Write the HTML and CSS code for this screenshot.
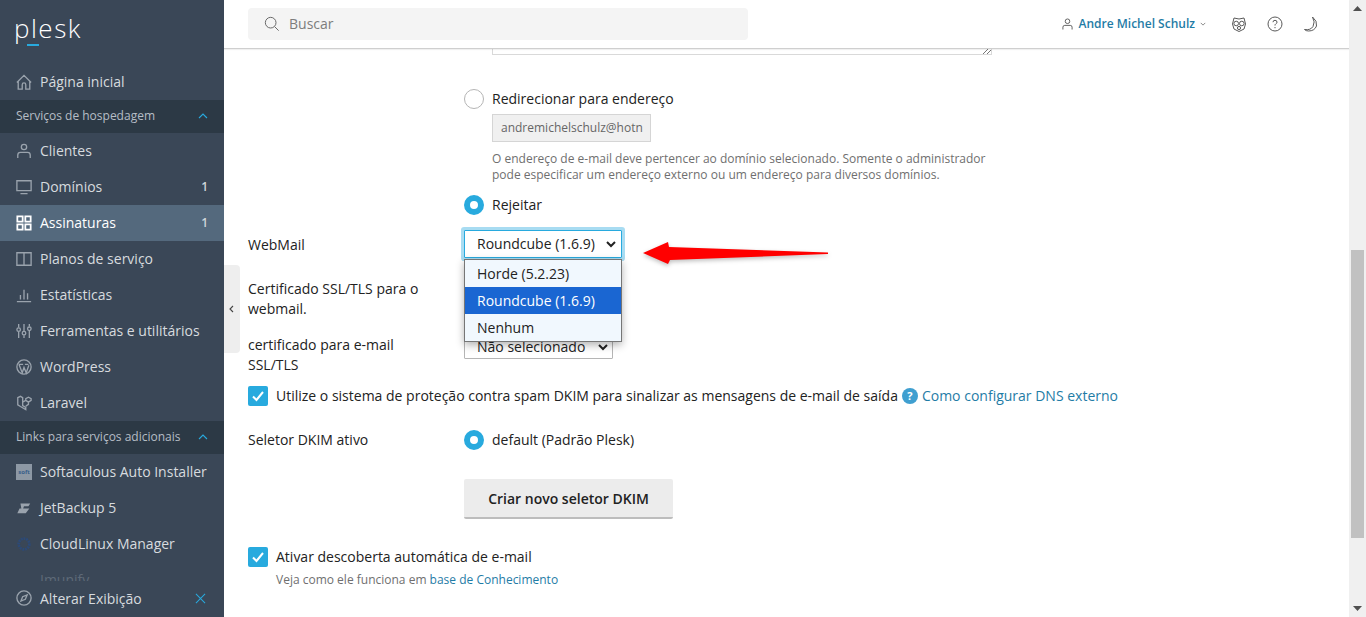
FILE: index.html
```html
<!DOCTYPE html>
<html lang="pt">
<head>
<meta charset="utf-8">
<title>Plesk</title>
<link rel="stylesheet" href="styles.css">
</head>
<body>
<div class="app">
  <aside class="sidebar">
    <div class="logo"><span class="logo-text">plesk</span><span class="logo-bar"></span></div>
    <nav class="nav">
      <a class="item"><svg class="ico" viewBox="0 0 18 18"><path d="M1 9.500 9 1.500l8 8M2.500 8v9H7v-5q0-2 2-2t2 2v5h4.500V8"/></svg><span>Página inicial</span></a>
      <div class="section"><span>Serviços de hospedagem</span><svg class="chev" viewBox="0 0 10 6"><path d="M1 5 5 1l4 4"/></svg></div>
      <a class="item"><svg class="ico" viewBox="0 0 18 18"><circle cx="9" cy="4.500" r="3"/><path d="M2 17v-3.500q0-3 3-3h8q3 0 3 3V17"/></svg><span>Clientes</span></a>
      <a class="item"><svg class="ico" viewBox="0 0 18 18"><path d="M1 2h16v11H1zM5 16.500h8"/></svg><span>Domínios</span><b class="count">1</b></a>
      <a class="item active"><svg class="ico" viewBox="0 0 18 18"><path d="M1.500 1.500h6v6h-6zM10.500 1.500h6v6h-6zM1.500 10.500h6v6h-6zM10.500 10.500h6v6h-6z"/></svg><span>Assinaturas</span><b class="count">1</b></a>
      <a class="item"><svg class="ico" viewBox="0 0 18 18"><path d="M1 2h16v14H1zM9 2v14"/></svg><span>Planos de serviço</span></a>
      <a class="item"><svg class="ico" viewBox="0 0 18 18"><path d="M1 16.500h16M5 14V9M9 14V3M13 14V7"/></svg><span>Estatísticas</span></a>
      <a class="item"><svg class="ico" viewBox="0 0 18 18"><path d="M3 1v4M3 10v7M9 1v8M9 14v3M15 1v3M15 9v8"/><circle cx="3" cy="7.500" r="2"/><circle cx="9" cy="11.500" r="2"/><circle cx="15" cy="6.500" r="2"/></svg><span>Ferramentas e utilitários</span></a>
      <a class="item"><svg class="ico" viewBox="0 0 18 18"><circle cx="9" cy="9" r="8"/><path d="M3.500 6.500 7 15.500 9 9.500l2.500 6 3-8.500M3 6h5M10 6h4"/></svg><span>WordPress</span></a>
      <a class="item"><svg class="ico" viewBox="0 0 18 18"><path d="M2 3 5 1.500 7.500 3v9l3.500 2v2.500L5 13 2 11zM7.500 8l3.500-2V4l3-1.500L17 4v2l-3 2-3-2M14 8v2.500l-3 2"/></svg><span>Laravel</span></a>
      <div class="section"><span>Links para serviços adicionais</span><svg class="chev" viewBox="0 0 10 6"><path d="M1 5 5 1l4 4"/></svg></div>
      <a class="item"><span class="soft">soft</span><span>Softaculous Auto Installer</span></a>
      <a class="item"><svg class="ico filled" viewBox="0 0 18 18"><path d="M5 4h11l-2 3H9L8 9.500h7L11 15H1.500L4 9.500h2z"/></svg><span>JetBackup 5</span></a>
      <a class="item"><svg class="ico cloud" viewBox="0 0 18 18"><circle cx="9" cy="9" r="6"/></svg><span>CloudLinux Manager</span></a>
      <a class="item faded"><span class="ico-space"></span><span>Imunify</span></a>
    </nav>
    <div class="foot">
      <svg class="ico" viewBox="0 0 18 18"><circle cx="9" cy="9" r="8"/><path d="M12.500 5.500 10.500 10.500 5.500 12.500 7.500 7.500z"/></svg>
      <span>Alterar Exibição</span>
      <svg class="close" viewBox="0 0 12 12"><path d="M1 1l10 10M11 1 1 11"/></svg>
    </div>
  </aside>

  <div class="main">
    <header class="top">
      <div class="search">
        <svg class="search-ico" viewBox="0 0 18 18"><circle cx="7.500" cy="7.500" r="6"/><path d="M12 12l4.500 4.500"/></svg>
        <span>Buscar</span>
      </div>
      <div class="user">
        <svg class="user-ico" viewBox="0 0 12 13"><circle cx="6" cy="3.500" r="2.500"/><path d="M1 12.500V10q0-2 2-2h6q2 0 2 2v2.500"/></svg>
        <span class="user-name">Andre Michel Schulz</span>
        <svg class="user-chev" viewBox="0 0 8 5"><path d="M1 1l3 3 3-3"/></svg>
      </div>
      <div class="tools">
        <svg viewBox="0 0 16 16"><path d="M3 2 8 3l5-1 1.500 6L13 13l-5 2.500L3 13 1.500 8z"/><circle cx="5.200" cy="7.500" r="2.300"/><circle cx="10.800" cy="7.500" r="2.300"/><circle cx="8" cy="12" r="1.600"/></svg>
        <svg viewBox="0 0 16 16"><circle cx="8" cy="8" r="7"/><path d="M6 6.200Q6 4.300 8 4.300T10 6.200Q10 7.300 8.800 7.900 8 8.300 8 9.500M8 11v1.200"/></svg>
        <svg viewBox="0 0 16 16"><path d="M9.500 1Q14.500 5 13.500 10 11.500 15 5.500 15 3 15 1.500 13.500 7.500 14.500 10 10.500 12.500 6 9.500 1z"/></svg>
      </div>
    </header>

    <div class="scroller">
      <div class="content">
        <div class="row">
          <div class="label"></div>
          <div class="field">
            <div class="textarea"><svg class="grip" viewBox="0 0 8 8"><path d="M0 8l8-8M4 8l4-4"/></svg></div>
            <div class="radio-line first"><span class="radio"></span><span>Redirecionar para endereço</span></div>
            <div class="sub">
              <div class="email"><span>andremichelschulz@hotn</span></div>
              <p class="hint">O endereço de e-mail deve pertencer ao domínio selecionado. Somente o administrador<br>pode especificar um endereço externo ou um endereço para diversos domínios.</p>
            </div>
            <div class="radio-line reject"><span class="radio on"></span><span>Rejeitar</span></div>
          </div>
        </div>

        <div class="row webmail">
          <div class="label">WebMail</div>
          <div class="field"><div class="select focus"><span>Roundcube (1.6.9)</span><svg viewBox="0 0 10 7"><path d="M1 1l4 4 4-4"/></svg></div></div>
        </div>
        <div class="row ssl">
          <div class="label">Certificado SSL/TLS para o webmail.</div>
          <div class="field"></div>
        </div>
        <div class="row mailcert">
          <div class="label">certificado para e-mail SSL/TLS</div>
          <div class="field"><div class="select small"><span>Não selecionado</span><svg viewBox="0 0 10 7"><path d="M1 1l4 4 4-4"/></svg></div></div>
        </div>

        <div class="check-line dkim">
          <span class="check"><svg viewBox="0 0 20 20"><path d="M5 10.500 8.500 14 15 6"/></svg></span>
          <span>Utilize o sistema de proteção contra spam DKIM para sinalizar as mensagens de e-mail de saída</span>
          <span class="help">?</span>
          <a class="link">Como configurar DNS externo</a>
        </div>

        <div class="row selector">
          <div class="label">Seletor DKIM ativo</div>
          <div class="field">
            <div class="radio-line"><span class="radio on"></span><span>default (Padrão Plesk)</span></div>
            <button class="btn" type="button">Criar novo seletor DKIM</button>
          </div>
        </div>

        <div class="check-line auto">
          <span class="check"><svg viewBox="0 0 20 20"><path d="M5 10.500 8.500 14 15 6"/></svg></span>
          <span>Ativar descoberta automática de e-mail</span>
        </div>
        <p class="auto-hint">Veja como ele funciona em <a class="link">base de Conhecimento</a></p>
      </div>
    </div>
  </div>

  <div class="scrollbar">
    <svg class="sb-arrow" viewBox="0 0 9 5"><path d="M4.500 0 9 5H0z"/></svg>
    <div class="sb-track"><div class="sb-thumb"></div></div>
    <svg class="sb-arrow" viewBox="0 0 9 5"><path d="M0 0h9L4.500 5z"/></svg>
  </div>

  <div class="collapse"><svg viewBox="0 0 5 8"><path d="M4 1 1 4l3 3"/></svg></div>

  <div class="menu">
    <div class="opt">Horde (5.2.23)</div>
    <div class="opt sel">Roundcube (1.6.9)</div>
    <div class="opt">Nenhum</div>
  </div>

  <svg class="red-arrow" viewBox="0 0 190 30"><path d="M1 14 26 3l1 5 159 5.500v1.500L28 21l-2 4z"/></svg>
</div>
</body>
</html>
```

FILE: styles.css
```css
* { box-sizing: border-box; }
html, body { margin: 0; height: 100%; overflow: hidden; }
body { font-family: "Open Sans", "Noto Sans", sans-serif; font-size: 14px; color: #222; background: #fff; }
svg { display: block; }
.app { position: relative; display: flex; width: 1366px; height: 617px; overflow: hidden; }

/* Sidebar */
.sidebar { position: relative; width: 224px; flex: none; height: 617px; background: #3a4757; color: #d9dde1; overflow: hidden; }
.logo { position: relative; height: 64px; }
.logo-text { position: absolute; left: 14px; top: 5px; font-family: "Open Sans", sans-serif; font-size: 26px; line-height: 46px; font-weight: 300; color: #fff; letter-spacing: 1.500px; }
.logo-bar { position: absolute; left: 27px; top: 44px; width: 12px; height: 2px; background: #28aade; }
.item { display: flex; align-items: center; height: 36px; padding: 0 16px; line-height: 20px; color: #d7dbdf; }
.item > span:not(.soft):not(.ico-space) { margin-left: 8px; }
.item.active { background: #54697d; color: #fff; }
.item.active .ico { stroke: #fff; stroke-width: 2; }
.item.faded { color: #5e6a78; }
.ico, .ico-space { width: 16px; height: 16px; flex: none; }
.ico { fill: none; stroke: #9aa3ad; stroke-width: 1.500; }
.ico.filled { fill: #9aa3ad; stroke: none; }
.ico.cloud { stroke: #2c4a78; stroke-width: 3; stroke-dasharray: 2 1; }
.soft { width: 16px; height: 16px; flex: none; background: #8d98a4; color: #3a5f8a; font-size: 6px; line-height: 16px; text-align: center; font-weight: 700; }
.count { margin-left: auto; font-weight: 600; font-size: 12px; color: #cfd5da; }
.section { display: flex; align-items: center; justify-content: space-between; height: 33px; padding: 0 16px 2px; background: #2c3945; color: #b6bdc5; font-size: 12px; line-height: 16px; }
.chev { width: 10px; height: 6px; fill: none; stroke: #28aade; stroke-width: 1.100; }
.foot { position: absolute; left: 0; right: 0; bottom: 0; height: 36px; display: flex; align-items: center; padding: 0 18px 2px 16px; background: #3a4757; color: #d7dbdf; }
.foot span { margin-left: 8px; flex: 1; }
.close { width: 11px; height: 11px; fill: none; stroke: #28aade; stroke-width: 1.100; }

/* Main */
.main { flex: 1; min-width: 0; display: flex; flex-direction: column; height: 617px; }
.top { position: relative; z-index: 2; height: 49px; flex: none; display: flex; align-items: center; padding: 0 30px 0 24px; background: #fff; border-bottom: 1px solid #cfcfcf; box-shadow: 0 1px 1px rgba(0,0,0,.06); }
.search { width: 500px; height: 32px; border-radius: 4px; background: #f4f4f4; display: flex; align-items: center; padding: 0 0 1px 16px; color: #7d7d7d; }
.search-ico { width: 16px; height: 16px; fill: none; stroke: #666; stroke-width: 1.100; margin-right: 9px; }
.user { margin-left: auto; display: flex; align-items: center; }
.user-ico { width: 11px; height: 12px; fill: none; stroke: #555; stroke-width: 1; margin-right: 6px; }
.user-name { color: #1f7ca6; font-size: 12px; font-weight: 600; line-height: 16px; }
.user-chev { width: 6px; height: 4px; fill: none; stroke: #666; stroke-width: 1; margin-left: 5px; }
.tools { display: flex; gap: 20px; margin-left: 25px; }
.tools svg { width: 16px; height: 16px; fill: none; stroke: #5a5a5a; stroke-width: 1; }

.scroller { flex: 1; min-height: 0; overflow: hidden; }
.content { padding: 0 0 0 24px; margin-top: -20px; }
.row { display: flex; }
.label { width: 216px; flex: none; line-height: 20px; padding-right: 20px; }
.field { flex: 1; min-width: 0; }
.textarea { position: relative; height: 26px; width: 500px; margin-left: 28px; border: 1px solid #d9d9d9; border-top: 0; background: #fff; }
.grip { position: absolute; right: 0; bottom: 0; width: 8px; height: 8px; fill: none; stroke: #777; stroke-width: 1; }
.radio-line { display: flex; align-items: center; gap: 8px; height: 20px; line-height: 20px; }
.radio-line.first { margin-top: 34px; }
.radio { width: 20px; height: 20px; flex: none; border-radius: 50%; border: 1px solid #b5b5b5; background: #fff; }
.radio.on { border: 6px solid #28aade; }
.sub { padding-left: 28px; }
.email { width: 159px; height: 28px; margin-top: 5px; background: #f0f0f0; border: 1px solid #d5d5d5; font-size: 12px; line-height: 26px; padding-left: 8px; color: #666; overflow: hidden; white-space: nowrap; }
.hint { margin: 9px 0 0; font-size: 12px; line-height: 16px; color: #6f6f6f; }
.radio-line.reject { margin-top: 12px; }
.webmail { margin-top: 15px; height: 38px; }
.webmail .label { padding-top: 5px; }
.select { display: flex; align-items: center; justify-content: space-between; border: 1px solid #b5b5b5; background: #fff; height: 26px; padding: 0 5px 0 12px; border-radius: 1px; line-height: 20px; }
.select svg { width: 10px; height: 7px; fill: none; stroke: #222; stroke-width: 2; }
.select.focus { width: 158px; height: 28px; border-color: #28aade; box-shadow: 0 0 0 3px #a8dcf2; }
.select.small { width: 149px; height: 24px; padding-right: 4px; }
.ssl { margin-top: 11px; height: 56px; }
.mailcert { height: 56px; }
.check-line { display: flex; align-items: center; line-height: 20px; }
.check { width: 20px; height: 20px; flex: none; margin-right: 8px; background: #28aade; border-radius: 2px; }
.check svg { width: 20px; height: 20px; fill: none; stroke: #fff; stroke-width: 2; }
.dkim { margin-top: -5px; height: 20px; }
.help { width: 16px; height: 16px; margin: 0 4px; border-radius: 50%; background: #3f9fd0; color: #fff; font-size: 11px; font-weight: 700; line-height: 16px; text-align: center; }
.link { color: #1f7ca6; }
.selector { margin-top: 24px; }
.btn { display: block; margin-top: 29px; width: 209px; height: 40px; padding: 1px 0 0; border: 0; border-bottom: 2px solid #bdbdbd; border-radius: 2px; background: #ececec; font: 600 14px/20px "Open Sans", sans-serif; color: #222; }
.auto { margin-top: 28px; height: 20px; }
.auto-hint { margin: 5px 0 0 28px; font-size: 12px; line-height: 16px; color: #6f6f6f; }

/* Overlays */
.collapse { position: absolute; left: 224px; top: 265px; width: 16px; height: 88px; background: #eee; border-radius: 0 4px 4px 0; display: flex; align-items: center; padding-left: 5px; }
.collapse svg { width: 5px; height: 8px; fill: none; stroke: #444; stroke-width: 1.100; }
.menu { position: absolute; left: 464px; top: 259px; width: 158px; height: 83px; border: 1px solid #767676; background: #f1f8fe; box-shadow: 0 3px 8px rgba(0,0,0,.3); }
.opt { height: 27px; padding-left: 12px; line-height: 27px; color: #222; }
.opt.sel { background: #1a66d2; color: #fff; }
.red-arrow { position: absolute; left: 642px; top: 239px; width: 190px; height: 30px; fill: #ff0000; filter: drop-shadow(0 2px 2px rgba(0,0,0,.25)); }

/* Scrollbar */
.scrollbar { width: 17px; flex: none; height: 617px; background: #f0f0f0; display: flex; flex-direction: column; align-items: center; }
.sb-arrow { width: 9px; height: 5px; margin: 6px 0; fill: #505050; flex: none; }
.sb-track { flex: 1; width: 100%; padding: 233px 2px 0; }
.sb-thumb { width: 100%; height: 288px; background: #c1c1c1; }
```
